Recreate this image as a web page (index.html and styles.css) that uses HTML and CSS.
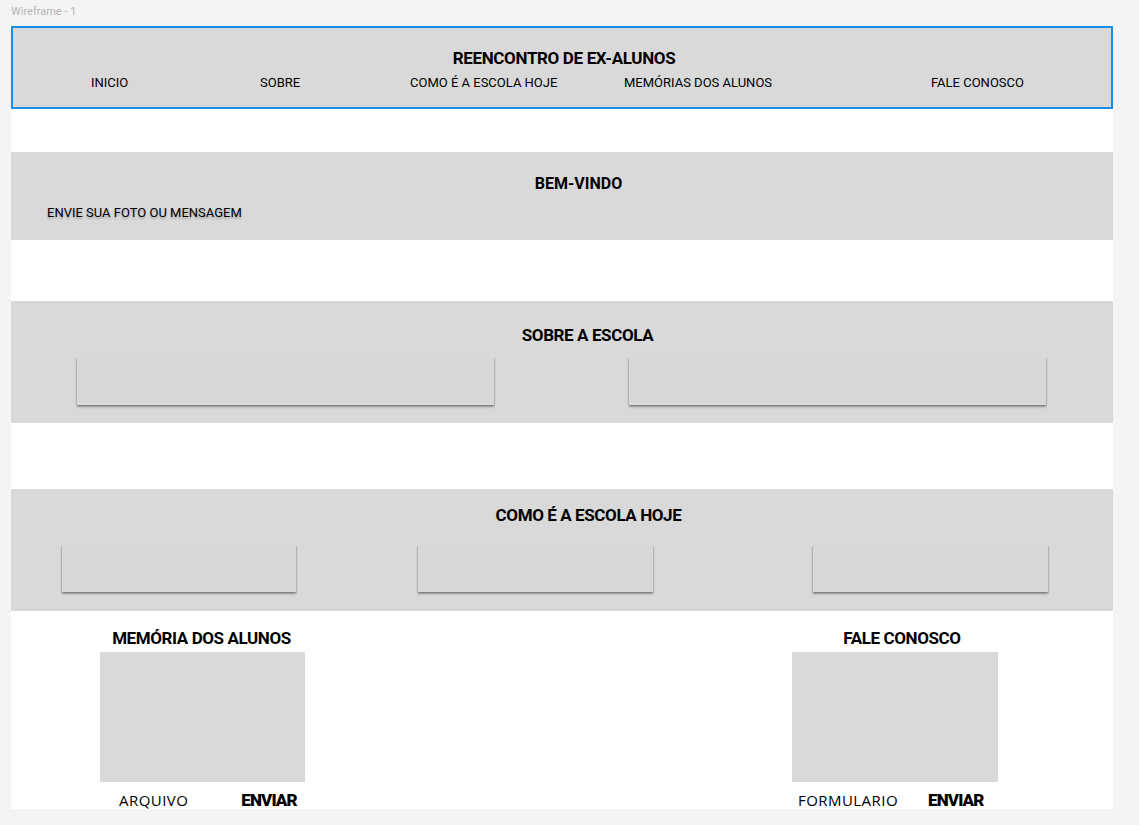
FILE: index.html
```html
<!DOCTYPE html>
<html lang="pt">
<head>
<meta charset="utf-8">
<title>Wireframe - 1</title>
<link rel="stylesheet" href="styles.css">
</head>
<body>
<div class="label">Wireframe - 1</div>
<div class="frame">
  <header class="header">
    <h1 class="site-title">REENCONTRO DE EX-ALUNOS</h1>
    <nav class="nav">
      <span>INICIO</span>
      <span>SOBRE</span>
      <span>COMO É A ESCOLA HOJE</span>
      <span>MEMÓRIAS DOS ALUNOS</span>
      <span>FALE CONOSCO</span>
    </nav>
  </header>

  <section class="band welcome">
    <h2 class="band-title">BEM-VINDO</h2>
    <p class="welcome-text">ENVIE SUA FOTO OU MENSAGEM</p>
  </section>

  <section class="band about">
    <h2 class="band-title">SOBRE A ESCOLA</h2>
    <div class="about-cards">
      <div class="card"></div>
      <div class="card"></div>
    </div>
  </section>

  <section class="band today">
    <h2 class="band-title">COMO É A ESCOLA HOJE</h2>
    <div class="today-cards">
      <div class="card c1"></div>
      <div class="card c2"></div>
      <div class="card c3"></div>
    </div>
  </section>

  <div class="bottom">
    <div class="block memories">
      <h2 class="block-title">MEMÓRIA DOS ALUNOS</h2>
      <div class="placeholder"></div>
      <div class="actions">
        <span class="light">ARQUIVO</span>
        <span class="strong">ENVIAR</span>
      </div>
    </div>
    <div class="block contact">
      <h2 class="block-title">FALE CONOSCO</h2>
      <div class="placeholder"></div>
      <div class="actions">
        <span class="light">FORMULARIO</span>
        <span class="strong">ENVIAR</span>
      </div>
    </div>
  </div>
</div>
</body>
</html>
```

FILE: styles.css
```css
* { box-sizing: border-box; }
html, body { margin: 0; padding: 0; }
body {
  background: #f4f4f4;
  font-family: Roboto, "Liberation Sans", sans-serif;
  color: #000;
  width: 1139px;
  height: 825px;
  overflow: hidden;
}
.label {
  height: 26px;
  padding: 5px 0 0 11px;
  font-size: 11px;
  color: #b4b4b4;
  line-height: 14px;
}
.frame {
  margin-left: 11px;
  width: 1102px;
  height: 783px;
  background: #fff;
  display: flex;
  flex-direction: column;
}
.header {
  height: 83px;
  background: #d9d9d9;
  border: 2px solid #1a8de6;
  display: flex;
  flex-direction: column;
}
.site-title {
  margin: 20px 0 0;
  font-size: 17px;
  line-height: 20px;
  font-weight: 700;
  letter-spacing: -0.35px;
  text-align: center;
  padding-left: 4px;
}
.nav {
  margin-top: 7px;
  padding-left: 78px;
  display: grid;
  grid-template-columns: 169px 150px 214px 307px auto;
  font-size: 13px;
  line-height: 16px;
}
.band { background: #d9d9d9; }
.band-title {
  margin: 0;
  font-size: 17px;
  line-height: 20px;
  font-weight: 700;
  letter-spacing: -0.4px;
  text-align: center;
}
.welcome {
  margin-top: 43px;
  height: 88px;
  padding-top: 22px;
}
.welcome .band-title { padding-left: 33px; font-size: 16px; letter-spacing: 0; }
.welcome-text {
  margin: 11px 0 0 36px;
  font-size: 13px;
  line-height: 16px;
  text-shadow: 0 2px 2px rgba(0,0,0,0.25);
}
.about {
  margin-top: 61px;
  height: 122px;
  padding-top: 24px;
}
.about .band-title { padding-left: 51px; }
.card {
  height: 48px;
  background: #d8d8d8;
  box-shadow: 0 2px 2px rgba(0,0,0,0.32), 1px 1px 1px rgba(0,0,0,0.08), -1px 1px 1px rgba(0,0,0,0.08);
}
.about-cards {
  margin-top: 12px;
  padding: 0 67px 0 66px;
  display: grid;
  grid-template-columns: 417px 417px;
  justify-content: space-between;
}
.today {
  margin-top: 66px;
  height: 122px;
  padding-top: 16px;
}
.today .band-title { padding-left: 53px; }
.today-cards {
  margin-top: 20px;
  display: flex;
}
.today-cards .card { height: 47px; width: 235px; }
.today-cards .c1 { margin-left: 51px; width: 234px; }
.today-cards .c2 { margin-left: 122px; }
.today-cards .c3 { margin-left: 160px; }
.bottom {
  flex: 1;
  display: flex;
  padding-top: 17px;
}
.block { display: flex; flex-direction: column; }
.memories { margin-left: 89px; width: 205px; }
.contact { margin-left: 487px; width: 206px; }
.block-title {
  margin: 0;
  font-size: 17px;
  line-height: 20px;
  font-weight: 700;
  letter-spacing: -0.4px;
  text-align: center;
  height: 24px;
}
.memories .block-title { margin-left: -3px; margin-right: -1px; }
.contact .block-title { margin-left: 7px; margin-right: -7px; }
.placeholder {
  height: 130px;
  background: #d9d9d9;
}
.actions {
  display: flex;
  align-items: center;
  height: 18px;
  margin-top: 9px;
}
.light {
  font-family: "Open Sans", sans-serif;
  font-size: 15px;
  font-weight: 400;
  letter-spacing: 0.45px;
}
.strong {
  font-size: 17px;
  font-weight: 900;
  letter-spacing: -0.85px;
}
.memories .light { margin-left: 19px; }
.memories .strong { margin-left: 53px; }
.contact .light { margin-left: 6px; }
.contact .strong { margin-left: 30px; }
```
